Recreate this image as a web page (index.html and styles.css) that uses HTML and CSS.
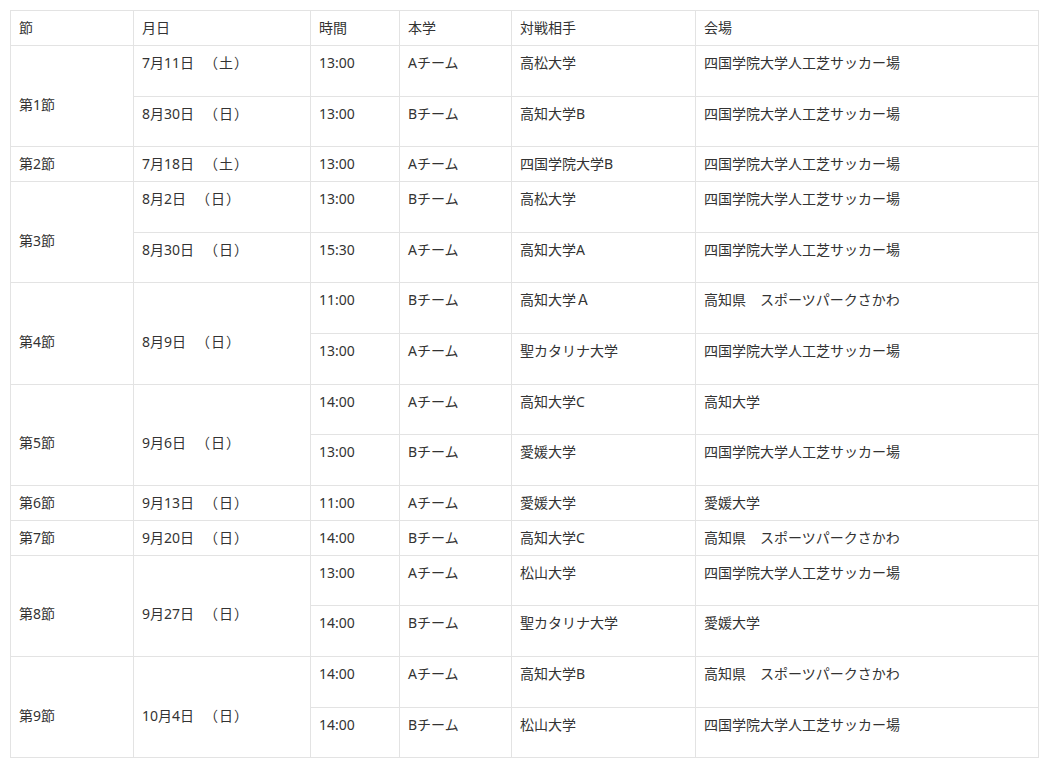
FILE: index.html
```html
<!DOCTYPE html>
<html lang="ja">
<head>
<meta charset="utf-8">
<title>日程</title>
<link rel="stylesheet" href="styles.css">
</head>
<body>
<table class="sched">
  <colgroup>
    <col class="c1"><col class="c2"><col class="c3"><col class="c4"><col class="c5"><col class="c6">
  </colgroup>
  <thead>
    <tr class="s"><td>節</td><td>月日</td><td>時間</td><td>本学</td><td>対戦相手</td><td>会場</td></tr>
  </thead>
  <tbody>
    <tr class="d"><td rowspan="2" class="span">第1節</td><td>7月11日　<span class="wd">（土）</span></td><td>13:00</td><td>Aチーム</td><td>高松大学</td><td>四国学院大学人工芝サッカー場</td></tr>
    <tr class="d"><td>8月30日　<span class="wd">（日）</span></td><td>13:00</td><td>Bチーム</td><td>高知大学B</td><td>四国学院大学人工芝サッカー場</td></tr>
    <tr class="s"><td>第2節</td><td>7月18日　<span class="wd">（土）</span></td><td>13:00</td><td>Aチーム</td><td>四国学院大学B</td><td>四国学院大学人工芝サッカー場</td></tr>
    <tr class="d"><td rowspan="2" class="span">第3節</td><td>8月2日　<span class="wd">（日）</span></td><td>13:00</td><td>Bチーム</td><td>高松大学</td><td>四国学院大学人工芝サッカー場</td></tr>
    <tr class="d"><td>8月30日　<span class="wd">（日）</span></td><td>15:30</td><td>Aチーム</td><td>高知大学A</td><td>四国学院大学人工芝サッカー場</td></tr>
    <tr class="d"><td rowspan="2" class="span">第4節</td><td rowspan="2" class="span">8月9日　<span class="wd">（日）</span></td><td>11:00</td><td>Bチーム</td><td>高知大学Ａ</td><td>高知県　スポーツパークさかわ</td></tr>
    <tr class="d"><td>13:00</td><td>Aチーム</td><td>聖カタリナ大学</td><td>四国学院大学人工芝サッカー場</td></tr>
    <tr class="d"><td rowspan="2" class="span">第5節</td><td rowspan="2" class="span">9月6日　<span class="wd">（日）</span></td><td>14:00</td><td>Aチーム</td><td>高知大学C</td><td>高知大学</td></tr>
    <tr class="d"><td>13:00</td><td>Bチーム</td><td>愛媛大学</td><td>四国学院大学人工芝サッカー場</td></tr>
    <tr class="s"><td>第6節</td><td>9月13日　<span class="wd">（日）</span></td><td>11:00</td><td>Aチーム</td><td>愛媛大学</td><td>愛媛大学</td></tr>
    <tr class="s"><td>第7節</td><td>9月20日　<span class="wd">（日）</span></td><td>14:00</td><td>Bチーム</td><td>高知大学C</td><td>高知県　スポーツパークさかわ</td></tr>
    <tr class="d"><td rowspan="2" class="span">第8節</td><td rowspan="2" class="span">9月27日　<span class="wd">（日）</span></td><td>13:00</td><td>Aチーム</td><td>松山大学</td><td>四国学院大学人工芝サッカー場</td></tr>
    <tr class="d"><td>14:00</td><td>Bチーム</td><td>聖カタリナ大学</td><td>愛媛大学</td></tr>
    <tr class="d"><td rowspan="2" class="span">第9節</td><td rowspan="2" class="span">10月4日　<span class="wd">（日）</span></td><td>14:00</td><td>Aチーム</td><td>高知大学B</td><td>高知県　スポーツパークさかわ</td></tr>
    <tr class="d"><td>14:00</td><td>Bチーム</td><td>松山大学</td><td>四国学院大学人工芝サッカー場</td></tr>
  </tbody>
</table>
</body>
</html>
```

FILE: styles.css
```css
body {
  margin: 10px;
  background: #fff;
  color: #333;
  font-family: "Noto Sans", "Noto Sans CJK JP", sans-serif;
  font-size: 14px;
}

.sched {
  width: 1028px;
  border-collapse: collapse;
  table-layout: fixed;
}

.c1 { width: 123px; }
.c2 { width: 177px; }
.c3 { width: 89px; }
.c4 { width: 112px; }
.c5 { width: 184px; }
.c6 { width: 343px; }

.sched td {
  border: 1px solid #e3e3e3;
  padding: 8px 8px 8px 8px;
  line-height: 18px;
  vertical-align: top;
  white-space: nowrap;
}

.sched tr.s { height: 35px; }
.sched tr.d { height: 50.6px; }

.sched td.span {
  vertical-align: middle;
  padding-top: 25px;
}

.wd {
  margin-left: 3px;
  letter-spacing: 1px;
}
```
